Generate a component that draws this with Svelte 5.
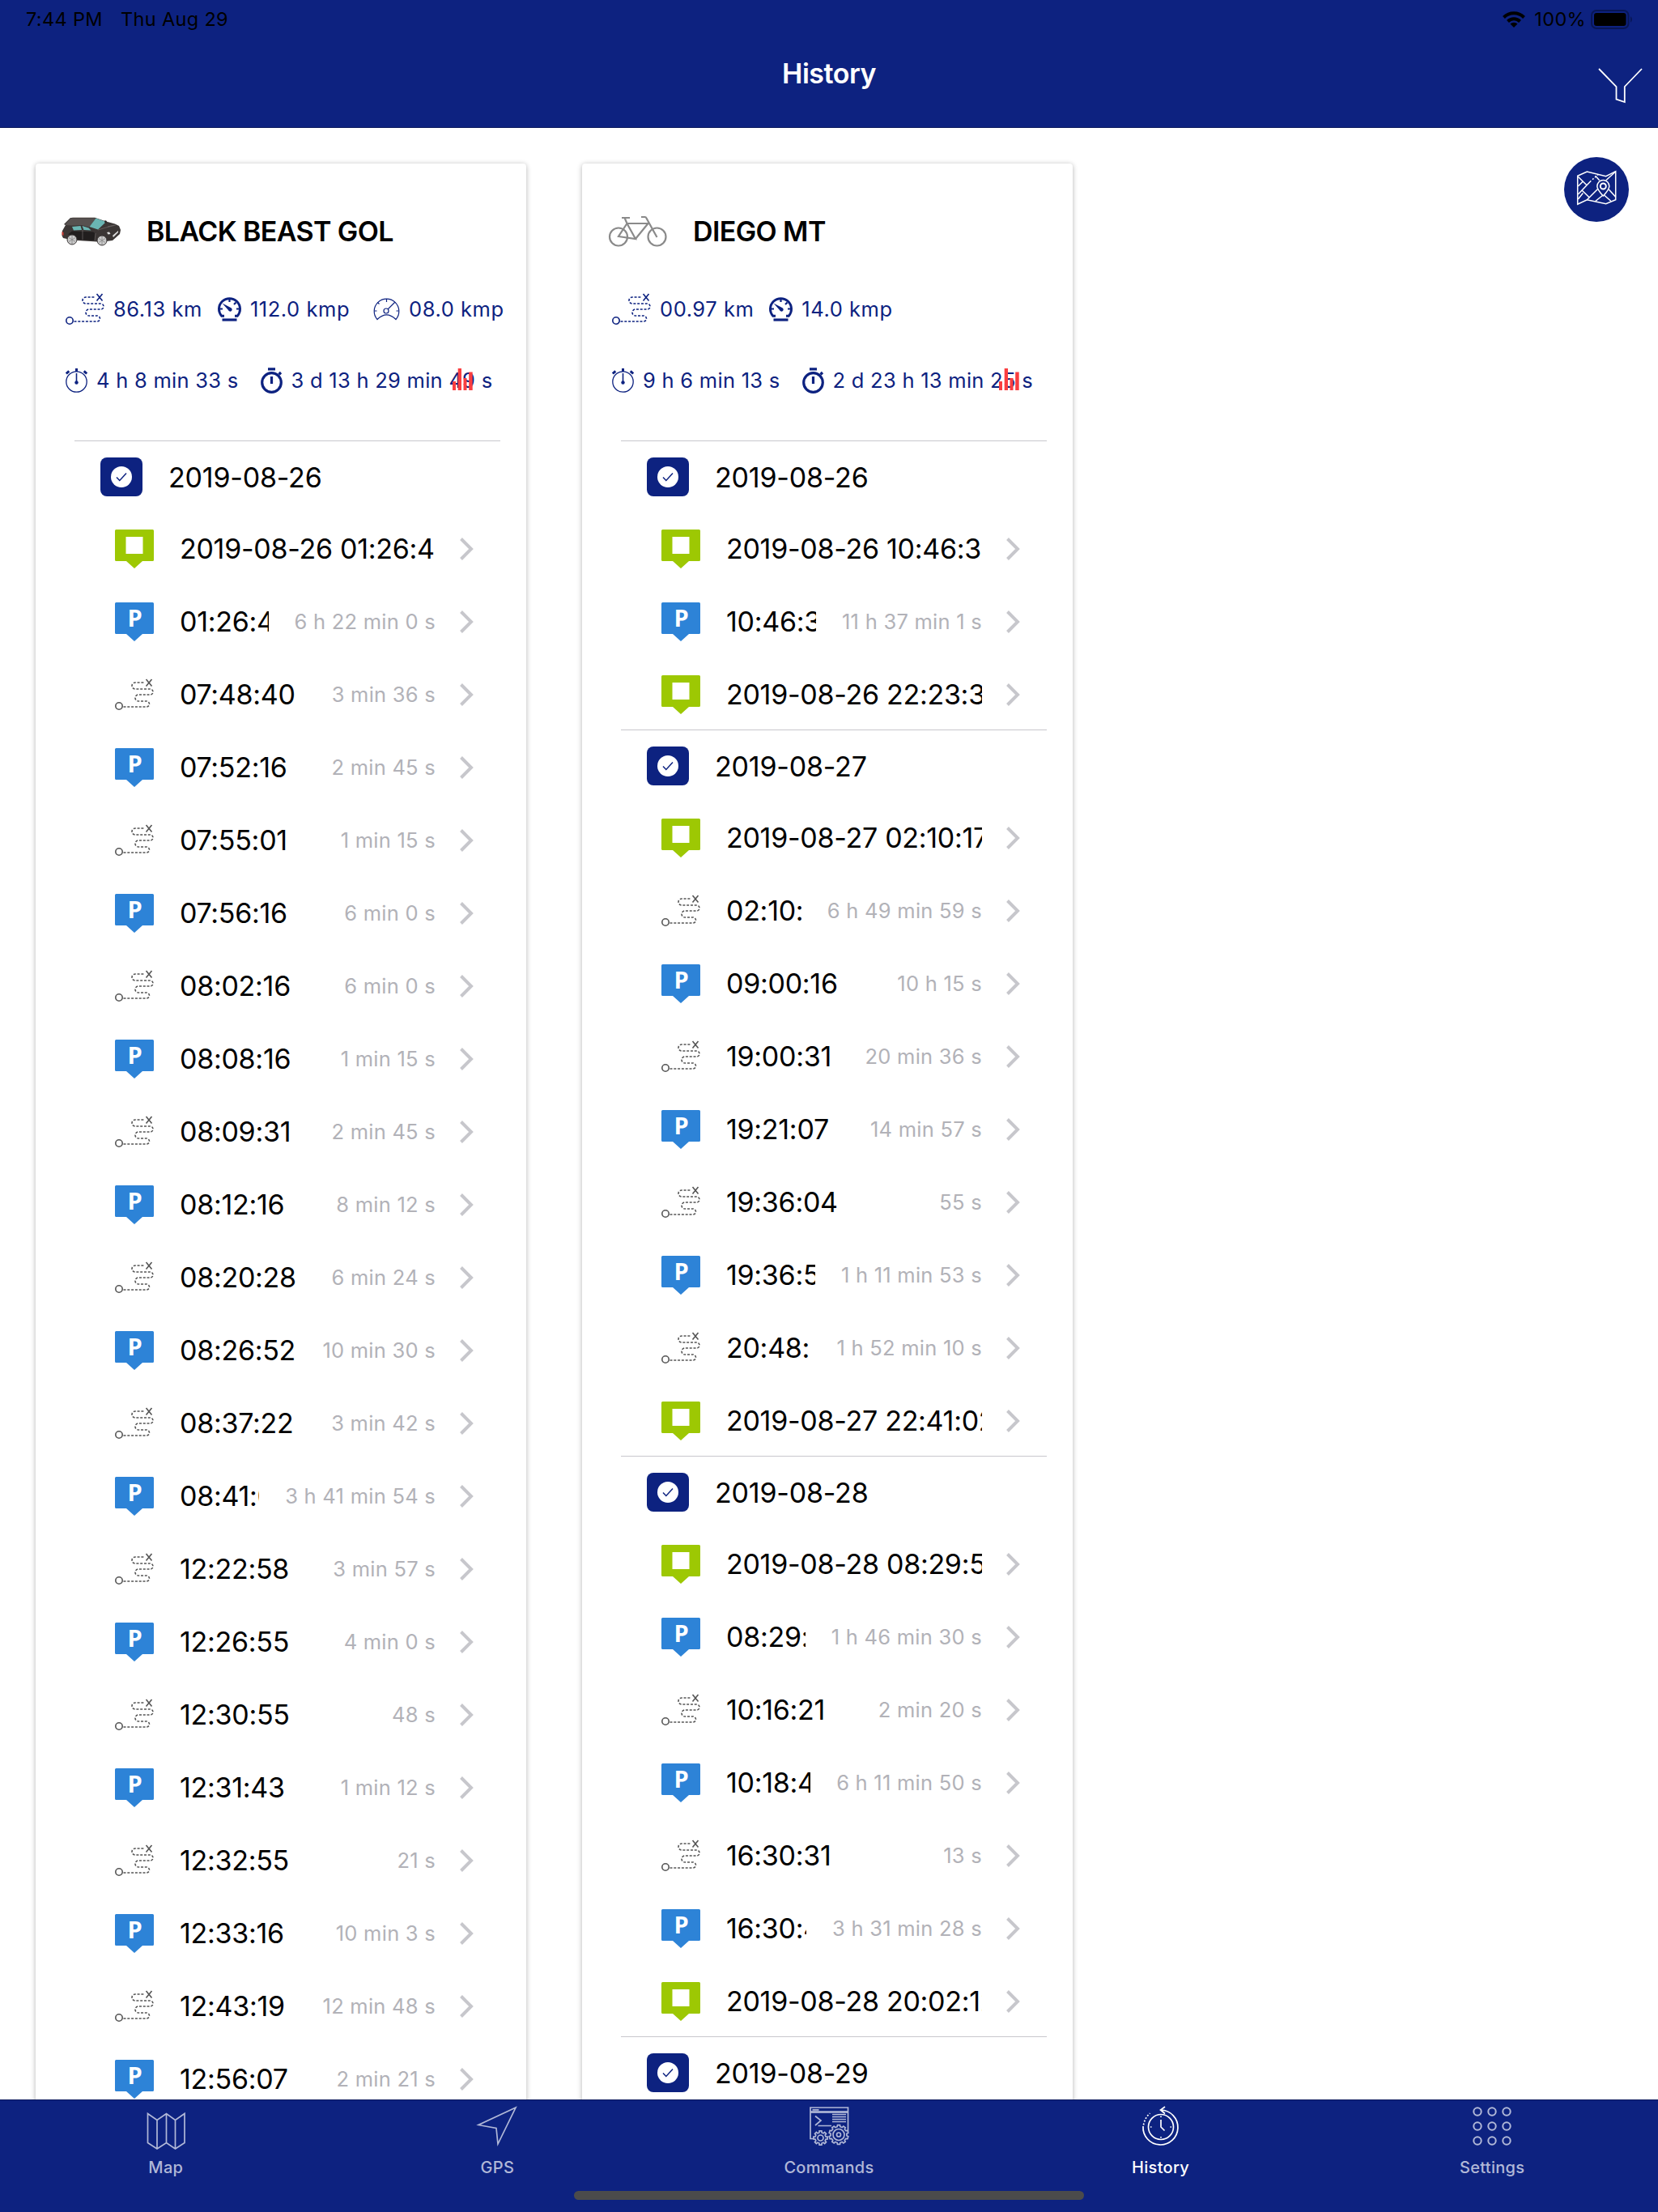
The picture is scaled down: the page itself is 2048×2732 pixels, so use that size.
<script lang="ts">
	type Kind = 'stop' | 'park' | 'route';
	type Entry = { kind: Kind; label: string; note?: string };
	type Day = { date: string; entries: Entry[] };

	const stop = (label: string): Entry => ({ kind: 'stop', label });
	const park = (label: string, note: string): Entry => ({ kind: 'park', label, note });
	const route = (label: string, note: string): Entry => ({ kind: 'route', label, note });

	const vehicles: {
		name: string;
		icon: string;
		distance: string;
		maxSpeed: string;
		avgSpeed?: string;
		moving: string;
		stopped: string;
		days: Day[];
	}[] = [
		{
			name: 'BLACK BEAST GOL',
			icon: 'car',
			distance: '86.13 km',
			maxSpeed: '112.0 kmp',
			avgSpeed: '08.0 kmp',
			moving: '4 h 8 min 33 s',
			stopped: '3 d 13 h 29 min 49 s',
			days: [
				{
					date: '2019-08-26',
					entries: [
						stop('2019-08-26 01:26:40'),
						park('01:26:40', '6 h 22 min 0 s'),
						route('07:48:40', '3 min 36 s'),
						park('07:52:16', '2 min 45 s'),
						route('07:55:01', '1 min 15 s'),
						park('07:56:16', '6 min 0 s'),
						route('08:02:16', '6 min 0 s'),
						park('08:08:16', '1 min 15 s'),
						route('08:09:31', '2 min 45 s'),
						park('08:12:16', '8 min 12 s'),
						route('08:20:28', '6 min 24 s'),
						park('08:26:52', '10 min 30 s'),
						route('08:37:22', '3 min 42 s'),
						park('08:41:04', '3 h 41 min 54 s'),
						route('12:22:58', '3 min 57 s'),
						park('12:26:55', '4 min 0 s'),
						route('12:30:55', '48 s'),
						park('12:31:43', '1 min 12 s'),
						route('12:32:55', '21 s'),
						park('12:33:16', '10 min 3 s'),
						route('12:43:19', '12 min 48 s'),
						park('12:56:07', '2 min 21 s')
					]
				}
			]
		},
		{
			name: 'DIEGO MT',
			icon: 'bike',
			distance: '00.97 km',
			maxSpeed: '14.0 kmp',
			moving: '9 h 6 min 13 s',
			stopped: '2 d 23 h 13 min 25 s',
			days: [
				{
					date: '2019-08-26',
					entries: [
						stop('2019-08-26 10:46:35'),
						park('10:46:35', '11 h 37 min 1 s'),
						stop('2019-08-26 22:23:36')
					]
				},
				{
					date: '2019-08-27',
					entries: [
						stop('2019-08-27 02:10:17'),
						route('02:10:17', '6 h 49 min 59 s'),
						park('09:00:16', '10 h 15 s'),
						route('19:00:31', '20 min 36 s'),
						park('19:21:07', '14 min 57 s'),
						route('19:36:04', '55 s'),
						park('19:36:59', '1 h 11 min 53 s'),
						route('20:48:52', '1 h 52 min 10 s'),
						stop('2019-08-27 22:41:02')
					]
				},
				{
					date: '2019-08-28',
					entries: [
						stop('2019-08-28 08:29:51'),
						park('08:29:51', '1 h 46 min 30 s'),
						route('10:16:21', '2 min 20 s'),
						park('10:18:41', '6 h 11 min 50 s'),
						route('16:30:31', '13 s'),
						park('16:30:44', '3 h 31 min 28 s'),
						stop('2019-08-28 20:02:12')
					]
				},
				{ date: '2019-08-29', entries: [] }
			]
		}
	];

	const tabs = ['Map', 'GPS', 'Commands', 'History', 'Settings'];
	let active = $state('History');
	const dots = [6, 24, 42];

	// outline of a cog with rounded-off square teeth
	function cog(cx: number, cy: number, r: number, teeth: number) {
		const pts: string[] = [];
		for (let i = 0; i < teeth; i++) {
			[[-0.3, r - 2], [-0.2, r], [0.2, r], [0.3, r - 2]].forEach(([o, rad]) => {
				const a = ((i + o) / teeth) * Math.PI * 2;
				pts.push(`${(cx + rad * Math.sin(a)).toFixed(1)} ${(cy - rad * Math.cos(a)).toFixed(1)}`);
			});
		}
		return `M${pts.join('L')}Z`;
	}
</script>

{#snippet routeIcon()}
	<svg class="route-icon" viewBox="0 0 48 48" fill="none" stroke="currentColor" stroke-width="1.6">
		<circle cx="5" cy="38" r="4.2" />
		<path
			stroke-dasharray="3 1.8"
			d="M10.500 39H39a3.500 3.500 0 0 0 0-7H29a4 4 0 0 1 0-8h14.500a3.500 3.500 0 0 0 0-7H25a4 4 0 0 1 0-8h11"
		/>
		<path d="M38.500 5l7 8.500M45.500 5l-7 8.500" />
	</svg>
{/snippet}

<div class="page">
	<header>
		<div class="status">
			<span>7:44 PM</span>
			<span class="today">Thu Aug 29</span>
			<svg class="wifi" viewBox="0 0 28 20" fill="none" stroke="#000" stroke-width="4">
				<path d="M1.500 7.500a17.500 17.500 0 0 1 25 0" />
				<path d="M6.500 12.500a10.500 10.500 0 0 1 15 0" />
				<path d="M14 20l-4.500-4.500a6.500 6.500 0 0 1 9 0z" fill="#000" stroke="none" />
			</svg>
			<span class="percent">100%</span>
			<svg class="battery" viewBox="0 0 53 24">
				<rect x="1" y="1" width="45.500" height="22" rx="6" fill="none" stroke="#081655" stroke-width="2" />
				<rect x="4" y="4" width="39.500" height="16" rx="3" />
				<path d="M49 8q4 4 0 8z" fill="#081655" />
			</svg>
		</div>
		<div class="nav">
			<h1>History</h1>
			<svg class="filter" viewBox="0 0 54 44" fill="none" stroke="#fff" stroke-width="1.800">
				<path d="M1 1l21.500 22v15.700l10.300 3.300V23L54 1" />
			</svg>
		</div>
	</header>

	<main>
		{#each vehicles as v}
			<section class="card">
				<div class="vehicle">
					{#if v.icon === 'car'}
						<svg class="vehicle-icon" viewBox="0 0 74 40">
							<path fill="#c9c5c2" d="M11 3.500l3-1.500h27l2 1.500z" />
							<path
								fill="#3b3635"
								d="M1 19l4-7-2-1 8-8h31l13 4.500 11 3 5 2.500 2 5-1 5-9 8-8 1-11 .500-24-1.500-9-1-9-2-1.500-3z"
							/>
							<path fill="#575150" d="M4 12l7.500-8.500h31L34 14.500l-9-2.500-12 .500z" />
							<path fill="#6ab5b3" d="M42.500 3.500l12.500 4.500-10 9.500-10.500-3.500zM25.500 13l8 2.500 3 3-9-.500zM13 14l10.500-1 1.500 5-10 .500z" />
							<path fill="#211e1e" d="M13 19.500l14 .500 12 .500 3 2-1 8.500-14-.500-8-1-3-5-8-1z" />
							<path fill="none" stroke="#716b6a" stroke-width=".700" d="M45 18l10-3 12-3M26 18v12M42 22l-1 9M57 14l8-2" />
							<path fill="#282424" d="M53.500 6l2.500 1-1 2.500-2-1z" />
							<path fill="#ddd" d="M56 21l3-.500 1.500 2.500-3 .500zM63 25l7-6v2l-6 6z" />
							<path fill="#cd3b33" d="M.500 20l2 1v4l-2-1z" />
							<circle cx="13" cy="30" r="6" fill="#c9c9c9" stroke="#393535" />
							<circle cx="50" cy="31" r="6" fill="#c9c9c9" stroke="#393535" />
							<path
								stroke="#888"
								stroke-width=".800"
								fill="none"
								d="M13 25v10M9 27.500l8 5M17 27.500l-8 5M50 26v10M46 28.500l8 5M54 28.500l-8 5"
							/>
						</svg>
					{:else}
						<svg class="vehicle-icon" viewBox="0 0 74 40" fill="none" stroke="#8a8a8a" stroke-width="2.200">
							<circle cx="13" cy="26.500" r="11" />
							<circle cx="60.500" cy="26.500" r="11" />
							<path d="M17 3h10M20.500 3l3 7 10.500 19-21-3 10.500-16h26L34 29M41 2h4.500q1.500 0 2 1.500L60.500 27" />
						</svg>
					{/if}
					<h2>{v.name}</h2>
				</div>

				<div class="stats">
					{@render routeIcon()}
					<span>{v.distance}</span>
					<svg class="max" viewBox="0 0 29 30" fill="none" stroke="currentColor">
						<path d="M8 23.300H4.800A13 13 0 1 1 24.200 23.300H21" stroke-width="3" />
						<path d="M14.500 2v4M3 14.500h3M26 14.500h-3M22.500 6.500l-2.500 2.500" stroke-width="2.200" />
						<path d="M5.500 7.500L16 13a2.400 2.400 0 1 1-3 3z" fill="currentColor" stroke="none" />
						<path d="M5.500 28h18" stroke-width="3.200" />
					</svg>
					<span>{v.maxSpeed}</span>
					{#if v.avgSpeed}
						<svg class="avg" viewBox="0 0 33 30" fill="none" stroke="currentColor" stroke-width="1.200">
							<path d="M5 27.500A15.300 15.300 0 1 1 28 27.500Q16.500 16 5 27.500z" />
							<circle cx="16" cy="17" r="3" />
							<path d="M18 15l9-9M16.500 2v4M1.500 17h3M31.500 17h-3M5.500 6.500l2 2" />
						</svg>
						<span>{v.avgSpeed}</span>
					{/if}
				</div>

				<div class="stats times">
					<svg class="watch" viewBox="0 0 27 30" fill="none" stroke="currentColor">
						<circle cx="13.500" cy="16.500" r="12.700" stroke-width="1.300" />
						<path d="M13.500 0v4M.800 6.500l3.500-3.200M26.200 6.500l-3.500-3.200" stroke-width="3" />
						<path d="M13.500 6v12" stroke-width="1.600" />
						<circle cx="13.500" cy="17.500" r="2.200" fill="currentColor" stroke="none" />
					</svg>
					<span>{v.moving}</span>
					<svg class="timer" viewBox="0 0 27 32" fill="none" stroke="currentColor" stroke-width="3.200">
						<circle cx="13.500" cy="18.500" r="11.800" />
						<path d="M9 1.800h9M22.500 8.500l2.500-2.500M13.500 11v9" />
					</svg>
					<span>{v.stopped}</span>
					<svg class="chart" viewBox="0 0 25 27" fill="#fa3e40">
						<path d="M0 16h4v11H0zM6.700 0H11v27H6.700zM13.500 12h4v15h-4zM20.200 4.500h4.500V27h-4.500z" />
					</svg>
				</div>

				<div class="days">
					{#each v.days as day}
						<div class="day">
							<span class="toggle">
								<svg viewBox="0 0 26 26">
									<circle cx="13" cy="13" r="13" fill="#fff" />
									<path d="M7 13.500l3.800 4L19 8.500" fill="none" stroke="#0d2280" stroke-width="1.500" />
								</svg>
							</span>
							<span class="date">{day.date}</span>
						</div>
						{#each day.entries as e}
							<div class="entry">
								{#if e.kind === 'route'}
									{@render routeIcon()}
								{:else}
									<svg class="pin" viewBox="0 0 48 48">
										<path
											fill={e.kind === 'park' ? '#2d83d7' : '#9dc803'}
											d="M1.500 0h45q1.500 0 1.500 1.500v36q0 1.500-1.500 1.500H34l-10 9-10-9H1.500Q0 39 0 37.500v-36Q0 0 1.500 0z"
										/>
										{#if e.kind === 'park'}
											<text x="24.500" y="30" text-anchor="middle">P</text>
										{:else}
											<path fill="#fff" d="M13.500 9h21v21h-21z" />
										{/if}
									</svg>
								{/if}
								<span class="label">{e.label}</span>
								{#if e.note}
									<span class="note">{e.note}</span>
								{/if}
								<svg class="chevron" viewBox="0 0 16 28" fill="none" stroke="#c7c7cc" stroke-width="4">
									<path d="M1.500 1.500L14 14 1.500 26.500" />
								</svg>
							</div>
						{/each}
					{/each}
				</div>
			</section>
		{/each}

		<button class="map-button" aria-label="Show map">
			<svg viewBox="0 0 80 80" fill="none" stroke="#fff" stroke-width="1.500">
				<path d="M16.700 23.300L28.300 18l23.400 5.700 12-6v35l-12 5-23.400-5L16.700 58.300z" />
				<path d="M17.300 24.300L28.300 35M17.300 36l6-6M17.300 46l16-16.700M22.300 41.300l9 8.700M17.300 52l6-7.500" />
				<path d="M28.300 52.700L42 39M38.700 23.300l5 5.400M52 28.500l11.500-10.500M55.300 40l8.400 9.300M48 47l-9.300 7.500M49.500 47l8.500 7.500" />
				<path d="M35 27.700l7-6" stroke-dasharray="2 2" />
				<path d="M48.300 48q-7.500-8-7.500-12a7.500 7.500 0 0 1 15 0q0 4-7.500 12z" fill="#0d2280" />
				<circle cx="48.300" cy="36" r="3.500" stroke-width="2" />
			</svg>
		</button>
	</main>

	<footer>
		<nav>
			{#each tabs as tab}
				<button class="tab" class:active={tab === active} onclick={() => (active = tab)}>
					<svg viewBox="0 0 48 48" fill="none" stroke="currentColor" stroke-width="1.700">
						{#if tab === 'Map'}
							<path d="M1.500 8.500L13 16.500l11.500-8 11 8 11.500-8v36l-11.500 7.500-11-7.500L13 52 1.500 44.500zM13 16.500V52M24.500 8.500v36M35.500 16.500V52" />
						{:else if tab === 'GPS'}
							<path d="M47 1L1 22.500l22 4L25 46z" />
						{:else if tab === 'Commands'}
							<path d="M4 39.500H1V1h46.500v30M1 6.500h46.500M3.500 3.800h8" />
							<path d="M1 6.500h46.500" stroke-width="2.500" />
							<path d="M7 11.500l7 5.500-7 6M10.500 23.500H27" />
							<path d="M28 9.500h17M28 12.500h17M28 15.500h17M28 18.500h17" />
							<path d={cog(36, 34.500, 12, 10)} fill="#0d2280" />
							<path d={cog(13.500, 38.500, 8.700, 8)} fill="#0d2280" />
							<circle cx="36" cy="34.500" r="7" />
							<circle cx="36" cy="34.500" r="2.500" />
							<circle cx="13.500" cy="38.500" r="3.500" />
						{:else if tab === 'History'}
							<path d="M2 24a21.500 21.500 0 1 0 22-20M29 0l-5.500 4 5.500 4.500" />
							<path d="M2.500 22.500Q4 14 10.500 8" stroke-dasharray="2 2" />
							<circle cx="24" cy="25" r="15.500" />
							<path d="M24 16v9l4.500 4.500M24 11.500v1.500M24 37v1.500M11 25h1.500M35.500 25H37" />
						{:else}
							{#each dots as y}
								{#each dots as x}
									<circle cx={x} cy={y} r="4.700" stroke-width="2" />
								{/each}
							{/each}
						{/if}
					</svg>
					<span>{tab}</span>
				</button>
			{/each}
		</nav>
		<div class="home-bar"></div>
	</footer>
</div>

<style>
	:global(body) {
		margin: 0;
	}

	.page {
		width: 2048px;
		height: 2732px;
		display: flex;
		flex-direction: column;
		overflow: hidden;
		background: #fff;
		color: #000;
		font-family: Inter, "Liberation Sans", sans-serif;
	}

	svg {
		display: block;
		flex-shrink: 0;
		overflow: visible;
	}

	header {
		box-sizing: border-box;
		height: 158px;
		flex-shrink: 0;
		background: #0d2280;
		border-bottom: 1px solid #09175a;
	}

	.status {
		height: 48px;
		padding: 0 30px 0 32px;
		display: flex;
		align-items: center;
		font-size: 23.500px;
		letter-spacing: 0.350px;
	}

	.status span {
		padding-bottom: 1px;
	}

	.today {
		margin-left: 22px;
	}

	.wifi {
		width: 28px;
		height: 20px;
		margin-left: auto;
	}

	.percent {
		margin-left: 11px;
	}

	.battery {
		width: 53px;
		height: 24px;
		margin-left: 6px;
	}

	.nav {
		height: 85px;
		padding: 0 20px;
		display: grid;
		grid-template-columns: 1fr auto 1fr;
		align-items: center;
	}

	.nav h1 {
		grid-column: 2;
		margin: 0;
		color: #fff;
		font-size: 34px;
		font-weight: 600;
		letter-spacing: -0.500px;
	}

	.filter {
		width: 54px;
		height: 44px;
		margin-top: 31px;
		justify-self: end;
	}

	main {
		flex: 1;
		min-height: 0;
		display: flex;
		gap: 69px;
		padding: 44px 0 0 44px;
		position: relative;
		overflow: hidden;
	}

	.card {
		box-sizing: border-box;
		width: 606px;
		height: 2600px;
		padding-top: 54px;
		border-radius: 4px;
		box-shadow: 0 1px 6px rgba(0, 0, 0, 0.3);
	}

	.vehicle {
		height: 60px;
		padding-left: 32px;
		display: flex;
		align-items: center;
		gap: 31px;
	}

	.vehicle-icon {
		width: 74px;
		height: 40px;
	}

	h2 {
		margin: -2px 0 0;
		font-size: 34px;
		font-weight: 600;
		letter-spacing: -0.600px;
	}

	.stats {
		position: relative;
		height: 88px;
		margin-top: 22px;
		padding-left: 37px;
		display: flex;
		align-items: center;
		color: #0d2280;
		font-size: 25.500px;
		letter-spacing: 0.550px;
		white-space: nowrap;
	}

	.times {
		margin-top: 0;
		letter-spacing: 0.270px;
	}

	.route-icon {
		width: 48px;
		height: 48px;
	}

	.stats span {
		margin-left: 11px;
		padding-bottom: 2px;
	}

	.max {
		width: 29px;
		height: 30px;
		margin-left: 19px;
	}

	.avg {
		width: 33px;
		height: 30px;
		margin-left: 29px;
	}

	.watch {
		width: 27px;
		height: 30px;
	}

	.timer {
		width: 27px;
		height: 32px;
		margin-left: 27px;
	}

	.chart {
		position: absolute;
		left: 515px;
		top: 29px;
		width: 25px;
		height: 27px;
	}

	.days {
		margin: 30px 32px 0 48px;
	}

	.day {
		box-sizing: border-box;
		height: 87px;
		padding: 2px 0 0 32px;
		border-top: 1px solid #c8c7cc;
		display: flex;
		align-items: center;
		gap: 32px;
		font-size: 34px;
	}

	.toggle {
		width: 52px;
		height: 48px;
		border-radius: 8px;
		background: #0d2280;
		display: flex;
		align-items: center;
		justify-content: center;
	}

	.toggle svg {
		width: 26px;
		height: 26px;
	}

	.date {
		letter-spacing: -0.200px;
	}

	.entry {
		box-sizing: border-box;
		height: 90px;
		padding: 4px 34px 0 50px;
		display: flex;
		align-items: center;
	}

	.entry .route-icon {
		color: #555;
	}

	.pin {
		width: 48px;
		height: 48px;
	}

	.pin text {
		fill: #fff;
		font: 700 29px "Open Sans", "Noto Sans", sans-serif;
	}

	.label {
		flex: 1;
		min-width: 0;
		margin-left: 32px;
		padding-bottom: 1px;
		overflow: hidden;
		white-space: nowrap;
		font-size: 34px;
		letter-spacing: -0.280px;
	}

	.note {
		margin-left: 32px;
		padding-bottom: 2px;
		color: #b2b2b8;
		font-size: 25.500px;
		letter-spacing: 0.250px;
		white-space: nowrap;
	}

	.chevron {
		width: 16px;
		height: 28px;
		margin-left: 30px;
	}

	.map-button {
		position: absolute;
		top: 36px;
		right: 36px;
		width: 80px;
		height: 80px;
		padding: 0;
		border: 0;
		border-radius: 50%;
		background: #0d2280;
	}

	footer {
		box-sizing: border-box;
		position: relative;
		height: 139px;
		flex-shrink: 0;
		background: #0d2280;
		border-top: 1px solid #09175a;
	}

	nav {
		display: flex;
	}

	.tab {
		flex: 1;
		padding: 8px 0 0;
		border: 0;
		background: none;
		display: flex;
		flex-direction: column;
		align-items: center;
		gap: 15px;
		color: #b1b8d7;
		font: 500 20px/24px Inter, sans-serif;
		letter-spacing: 0.300px;
	}

	.tab svg {
		width: 48px;
		height: 48px;
	}

	.tab.active {
		color: #fff;
	}

	.home-bar {
		width: 630px;
		height: 11px;
		margin: 17px auto 0;
		border-radius: 6px;
		background: #4b4b4b;
	}
</style>
